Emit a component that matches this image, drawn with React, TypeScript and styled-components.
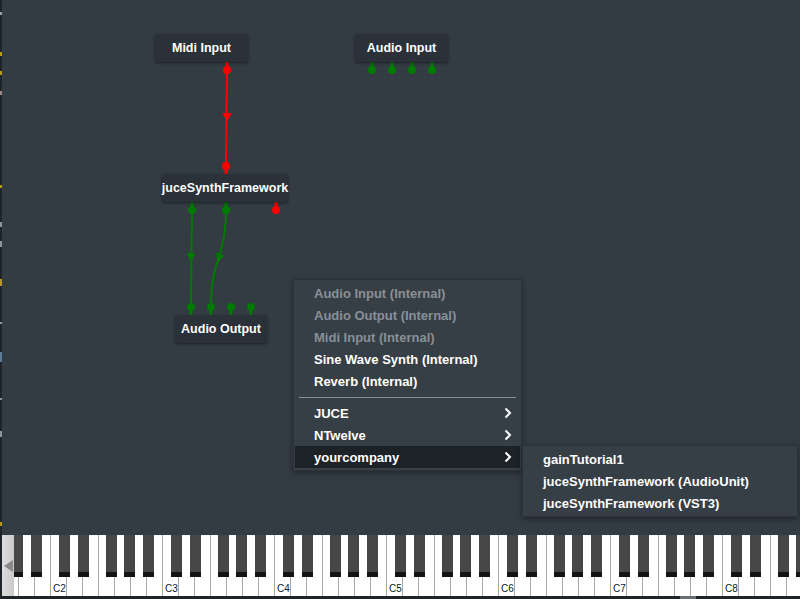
import styled, { createGlobalStyle } from "styled-components";

const GlobalStyle = createGlobalStyle`
  html, body {
    margin: 0;
    padding: 0;
    background: #333b43;
    overflow: hidden;
  }
  * {
    box-sizing: border-box;
  }
`;

const UI_FONT = `"Liberation Sans", Arial, sans-serif`;
const SIDE = 2;

type NodeInfo = { label: string; x: number; y: number; w: number };

const nodes: NodeInfo[] = [
  { label: "Midi Input", x: 155, y: 34, w: 93 },
  { label: "Audio Input", x: 355, y: 34, w: 93 },
  { label: "juceSynthFramework", x: 162, y: 174, w: 126 },
  { label: "Audio Output", x: 175, y: 315, w: 92 },
];

type Pin = { x: number; y: number; edge: number; color: string };

const RED = "#ff0000";
const GREEN = "#007a00";

const pins: Pin[] = [
  { x: 227, y: 70, edge: 62, color: RED },
  { x: 372, y: 70, edge: 62, color: GREEN },
  { x: 392, y: 70, edge: 62, color: GREEN },
  { x: 412, y: 70, edge: 62, color: GREEN },
  { x: 432, y: 70, edge: 62, color: GREEN },
  { x: 226, y: 166, edge: 174, color: RED },
  { x: 192, y: 210, edge: 202, color: GREEN },
  { x: 226, y: 210, edge: 202, color: GREEN },
  { x: 276, y: 210, edge: 202, color: RED },
  { x: 191, y: 307, edge: 315, color: GREEN },
  { x: 211, y: 307, edge: 315, color: GREEN },
  { x: 231, y: 307, edge: 315, color: GREEN },
  { x: 251, y: 307, edge: 315, color: GREEN },
];

const menuItems = [
  { label: "Audio Input (Internal)", disabled: true },
  { label: "Audio Output (Internal)", disabled: true },
  { label: "Midi Input (Internal)", disabled: true },
  { label: "Sine Wave Synth (Internal)" },
  { label: "Reverb (Internal)" },
];

const subMenus = [
  { label: "JUCE" },
  { label: "NTwelve" },
  { label: "yourcompany", active: true },
];

const pluginItems = [
  "gainTutorial1",
  "juceSynthFramework (AudioUnit)",
  "juceSynthFramework (VST3)",
];

const sideMarks = [
  { top: 12, h: 3, c: "#9aa0a6" },
  { top: 52, h: 4, c: "#b59a1c" },
  { top: 71, h: 4, c: "#b59a1c" },
  { top: 91, h: 4, c: "#a08a88" },
  { top: 185, h: 3, c: "#b59a1c" },
  { top: 222, h: 5, c: "#8f959b" },
  { top: 241, h: 6, c: "#8f959b" },
  { top: 279, h: 7, c: "#b59a1c" },
  { top: 322, h: 2, c: "#8f959b" },
  { top: 352, h: 10, c: "#5d7a99" },
  { top: 398, h: 2, c: "#8f959b" },
  { top: 431, h: 6, c: "#8f959b" },
  { top: 522, h: 4, c: "#b59a1c" },
];

const BLACK_OFFSETS = [9, 28, 56, 74, 93];
const OCTAVES = [1, 2, 3, 4, 5, 6, 7, 8];

const Arrow = ({ x, y, color, angle = 0 }: { x: number; y: number; color: string; angle?: number }) => (
  <polygon
    points={`${x - 4.5},${y - 4} ${x + 4.5},${y - 4} ${x},${y + 5}`}
    fill={color}
    transform={`rotate(${angle} ${x} ${y})`}
  />
);

const App = () => {
  return (
    <Window>
      <GlobalStyle />
      <SideStrip>
        {sideMarks.map((m, i) => (
          <SideMark key={i} style={{ top: m.top, height: m.h, background: m.c }} />
        ))}
      </SideStrip>
      <Main>
        <Canvas>
          <Wires width="798" height="535">
            <g transform={`translate(${-SIDE},0)`}>
              <path d="M227,70 L226,166" stroke={RED} strokeWidth="2" fill="none" />
              <Arrow x={227} y={117} color={RED} />
              <path d="M192,210 L191,307" stroke={GREEN} strokeWidth="2" fill="none" />
              <Arrow x={191} y={257} color={GREEN} />
              <path d="M226,210 C226,258 211,258 211,307" stroke={GREEN} strokeWidth="2" fill="none" />
              <Arrow x={219} y={258} color={GREEN} angle={17} />
              {pins.map((p, i) => (
                <g key={i}>
                  <rect
                    x={p.x - 1.5}
                    y={Math.min(p.y, p.edge)}
                    width={3}
                    height={Math.abs(p.edge - p.y)}
                    fill={p.color}
                  />
                  <circle cx={p.x} cy={p.y} r={4} fill={p.color} />
                </g>
              ))}
            </g>
          </Wires>

          {nodes.map((n) => (
            <Node key={n.label} $x={n.x - SIDE} $y={n.y} $w={n.w}>
              {n.label}
            </Node>
          ))}

          <Menu $x={293 - SIDE} $y={279} $w={229}>
            {menuItems.map((m) => (
              <MenuItem key={m.label} $disabled={m.disabled}>
                {m.label}
              </MenuItem>
            ))}
            <Separator />
            {subMenus.map((m) => (
              <MenuItem key={m.label} $active={m.active}>
                {m.label}
                <Chevron viewBox="0 0 8 12">
                  <path d="M1.5,1.5 L6,6 L1.5,10.5" stroke="#fff" strokeWidth="2" fill="none" />
                </Chevron>
              </MenuItem>
            ))}
          </Menu>

          <Menu $x={522 - SIDE} $y={445} $w={276}>
            {pluginItems.map((p) => (
              <MenuItem key={p}>{p}</MenuItem>
            ))}
          </Menu>
        </Canvas>

        <Keyboard>
          <ScrollButton>
            <svg width="9" height="12" viewBox="0 0 9 12">
              <polygon points="0,6 9,0 9,12" fill="#8a8a8a" />
            </svg>
          </ScrollButton>
          <KeysViewport>
            <KeysRow>
              {OCTAVES.map((o) => (
                <Octave key={o}>
                  {Array.from({ length: 7 }).map((_, i) => (
                    <WhiteKey key={i}>{i === 0 && o > 1 && <KeyLabel>C{o}</KeyLabel>}</WhiteKey>
                  ))}
                  {BLACK_OFFSETS.map((left) => (
                    <BlackKey key={left} style={{ left }} />
                  ))}
                </Octave>
              ))}
            </KeysRow>
          </KeysViewport>
        </Keyboard>
        <BottomBar>
          <ScrollThumb />
        </BottomBar>
      </Main>
    </Window>
  );
};

const Window = styled.div`
  width: 800px;
  height: 599px;
  display: flex;
  background: #333b43;
  font-family: ${UI_FONT};
  overflow: hidden;
`;

const SideStrip = styled.div`
  width: ${SIDE}px;
  flex: none;
  background: #1f242a;
  position: relative;
`;

const SideMark = styled.span`
  position: absolute;
  left: 0;
  width: 2px;
`;

const Main = styled.div`
  flex: 1;
  display: flex;
  flex-direction: column;
  min-width: 0;
`;

const Canvas = styled.div`
  position: relative;
  height: 535px;
  flex: none;
  background: #333b43;
`;

const Wires = styled.svg`
  position: absolute;
  left: 0;
  top: 0;
`;

const Node = styled.div<{ $x: number; $y: number; $w: number }>`
  position: absolute;
  left: ${(p) => p.$x}px;
  top: ${(p) => p.$y}px;
  width: ${(p) => p.$w}px;
  height: 28px;
  display: flex;
  align-items: center;
  justify-content: center;
  background: #2a3138;
  border-radius: 3px;
  box-shadow: 0 1px 3px rgba(0, 0, 0, 0.45);
  color: #ffffff;
  font-size: 12.5px;
  font-weight: 700;
  white-space: nowrap;
`;

const Menu = styled.div<{ $x: number; $y: number; $w: number }>`
  position: absolute;
  left: ${(p) => p.$x}px;
  top: ${(p) => p.$y}px;
  width: ${(p) => p.$w}px;
  padding: 2px 1px 2px;
  display: flex;
  flex-direction: column;
  background: #363e46;
  border: 1px solid #2b3138;
  box-shadow: 0 2px 6px rgba(0, 0, 0, 0.35);
`;

const MenuItem = styled.div<{ $disabled?: boolean; $active?: boolean }>`
  height: 22px;
  display: flex;
  align-items: center;
  justify-content: space-between;
  padding: 0 8px 0 19px;
  font-size: 13px;
  font-weight: 700;
  white-space: nowrap;
  color: ${(p) => (p.$disabled ? "#8a9096" : "#ffffff")};
  background: ${(p) => (p.$active ? "#1d2227" : "transparent")};
`;

const Separator = styled.div`
  height: 10px;
  margin: 0 4px;
  display: flex;
  align-items: center;

  &::after {
    content: "";
    flex: 1;
    height: 1px;
    background: #8a9096;
  }
`;

const Chevron = styled.svg`
  width: 8px;
  height: 12px;
`;

const Keyboard = styled.div`
  height: 61px;
  flex: none;
  display: flex;
  background: #ffffff;
`;

const ScrollButton = styled.div`
  width: 12px;
  flex: none;
  display: flex;
  align-items: center;
  justify-content: center;
  background: linear-gradient(to right, #dcdcdc, #cacaca);
`;

const KeysViewport = styled.div`
  flex: 1;
  overflow: hidden;
  position: relative;
  box-shadow: inset 0 2px 2px rgba(0, 0, 0, 0.15);
`;

const KeysRow = styled.div`
  display: flex;
  height: 100%;
  margin-left: -76px;
`;

const Octave = styled.div`
  position: relative;
  width: 112px;
  flex: none;
  display: flex;
  height: 100%;
`;

const WhiteKey = styled.div`
  width: 16px;
  flex: none;
  height: 100%;
  border-left: 1px solid #a8a8a8;
  background: #ffffff;
  display: flex;
  align-items: flex-end;
  padding: 0 0 2px 2px;
`;

const KeyLabel = styled.span`
  font-family: ${UI_FONT};
  font-size: 10px;
  line-height: 10px;
  color: #0c1a2a;
`;

const BlackKey = styled.div`
  position: absolute;
  top: 0;
  width: 11px;
  height: 42px;
  background: #474747;
  border-bottom: 5px solid #141414;
`;

const BottomBar = styled.div`
  flex: 1;
  background: #1f2328;
  padding-left: 678px;
`;

const ScrollThumb = styled.div`
  width: 16px;
  height: 100%;
  background: #6b6f73;
`;

export default App;
